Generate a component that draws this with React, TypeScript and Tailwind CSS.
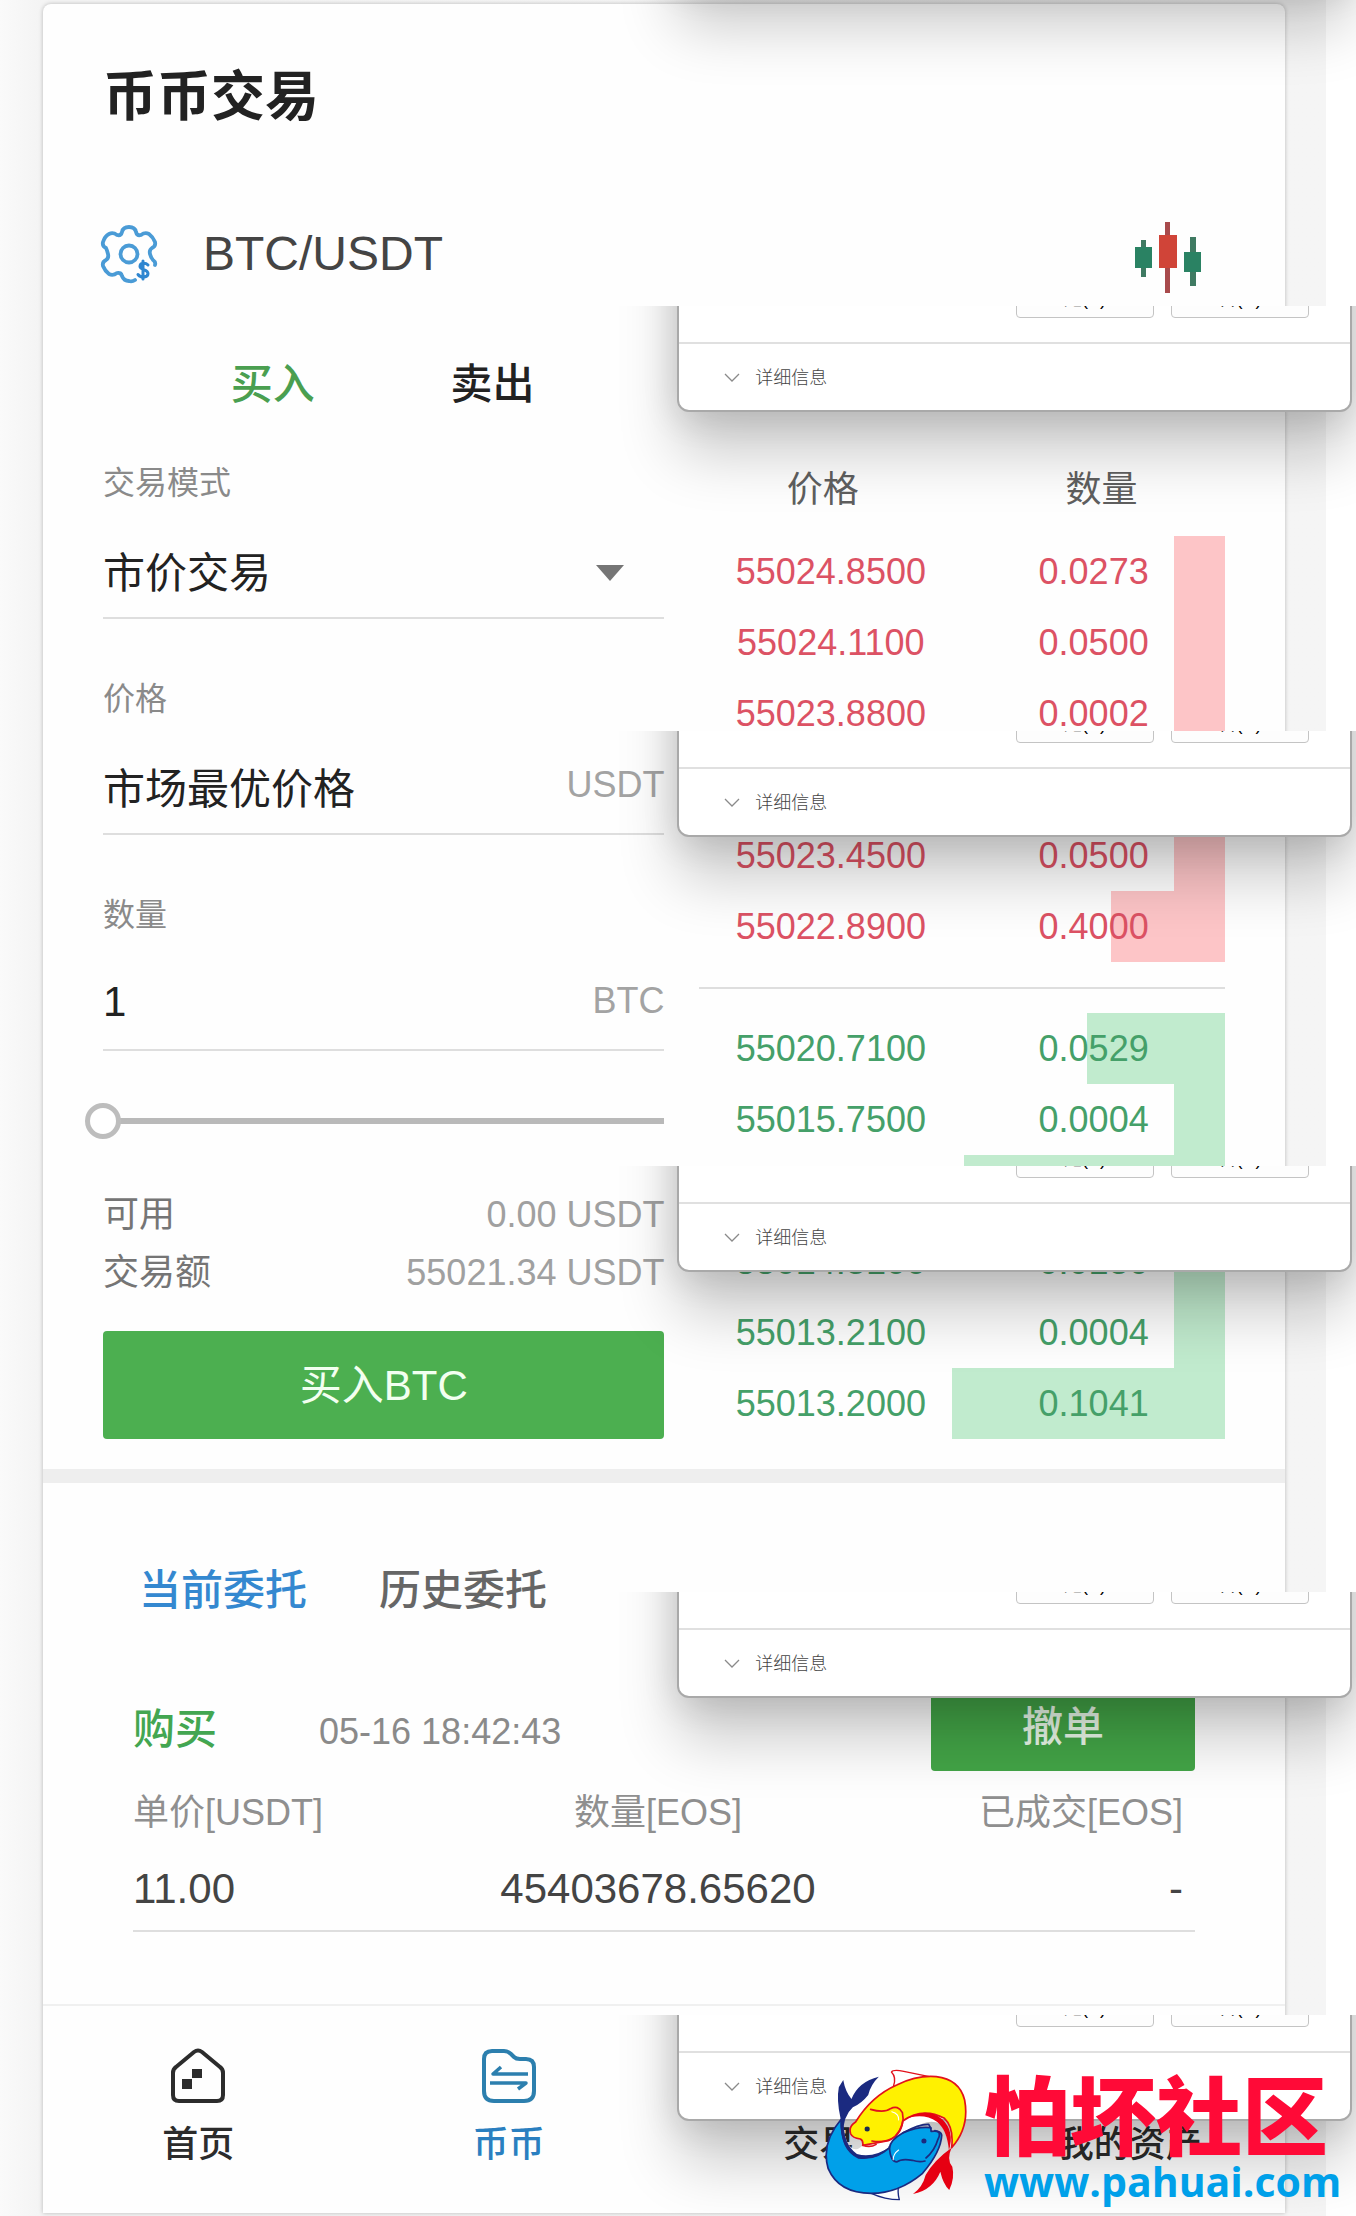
import React, { useState } from "react";
import { ArrowLeftRight, Wallet } from "lucide-react";

type BookRow = { price: string; amount: string; depth: number };

const asks: BookRow[] = [
  { price: "55024.8500", amount: "0.0273", depth: 9.7 },
  { price: "55024.1100", amount: "0.0500", depth: 9.7 },
  { price: "55023.8800", amount: "0.0002", depth: 9.7 },
  { price: "55023.6500", amount: "0.0100", depth: 9.7 },
  { price: "55023.4500", amount: "0.0500", depth: 9.7 },
  { price: "55022.8900", amount: "0.4000", depth: 21.7 },
];

const bids: BookRow[] = [
  { price: "55020.7100", amount: "0.0529", depth: 26.3 },
  { price: "55015.7500", amount: "0.0004", depth: 9.7 },
  { price: "55015.0000", amount: "0.1000", depth: 49.7 },
  { price: "55014.3100", amount: "0.0130", depth: 9.7 },
  { price: "55013.2100", amount: "0.0004", depth: 9.7 },
  { price: "55013.2000", amount: "0.1041", depth: 52 },
];

function GearIcon() {
  return (
    <svg viewBox="0 0 60 60" className="size-[60px]" fill="none" stroke="#4a9bd6" strokeWidth="3.8" strokeLinejoin="round" strokeLinecap="round" aria-hidden="true">
      <path d="M23 8q1-5 7-5t7 5q1 4 5 3 4-3 8-1 4 3 6 8 1 4-3 6-3 2-2 6t3 6q3 2 2 5M36 56q-3 2-6 1-5 0-7-5-1-4-5-3-4 3-8 1-4-3-6-8-1-4 3-6 3-2 2-6t-2-6q-4-2-3-6 2-6 6-8 4-2 8 1 4 1 5-3" />
      <circle cx="30" cy="30" r="8.500" />
      <path d="M49 41c-3-3-8-2-8 1.500s8 3 8 7-7 5-10 1M44 37v18" stroke="#2f86d0" strokeWidth="3" />
    </svg>
  );
}

function CandlesIcon() {
  return (
    <svg viewBox="0 0 68 74" className="h-[74px] w-[68px]" aria-hidden="true">
      <path d="M7 19h5v37H7zM56 16h6v49h-6z" fill="#3f7a62" />
      <path d="M1 26h17v21H1zM50 31h17v20H50z" fill="#2a8263" />
      <path d="M31 1h5v71h-5z" fill="#a84a4c" />
      <path d="M25 14h18v33H25z" fill="#d04438" />
    </svg>
  );
}

function HomeIcon() {
  return (
    <svg viewBox="0 0 56 56" className="size-14" fill="none" stroke="#2c2c2c" strokeWidth="4" strokeLinejoin="round" aria-hidden="true">
      <path d="M3 25q0-4 3-6L24 4q4-3 8 0l18 15q3 2 3 6v22q0 6-6 6H9q-6 0-6-6z" />
      <path d="M22 21h10v9H22zM12 31h10v10H12z" fill="#2c2c2c" stroke="none" />
    </svg>
  );
}

function CoinFolderIcon() {
  return (
    <svg viewBox="0 0 56 56" className="size-14" fill="none" stroke="#2c7fae" strokeWidth="4" strokeLinejoin="round" aria-hidden="true">
      <path d="M3 11q0-8 8-8h12q4 0 7 3l3 3q2 2 6 2h6q8 0 8 8v24q0 10-10 10H13Q3 53 3 43z" />
      <path d="M47 26H12l8-7M9 35h36l-8 6" strokeWidth="3.500" />
    </svg>
  );
}

function Field({ id, label, children }: { id: string; label: string; children: React.ReactNode }) {
  return (
    <div>
      <label htmlFor={id} className="flex h-12 items-center text-[32px] text-[#8a8a8a]">
        {label}
      </label>
      <div className="mt-[22px] flex h-[90px] items-center gap-3 border-b-2 border-[#dedede]">{children}</div>
    </div>
  );
}

function BookRows({ rows, tone }: { rows: BookRow[]; tone: "ask" | "bid" }) {
  const text = tone === "ask" ? "text-[#dc5264]" : "text-[#45a069]";
  const bar = tone === "ask" ? "bg-[#fdc5c7]" : "bg-[#c1ebce]";
  return (
    <tbody className={text}>
      {rows.map((r) => (
        <tr key={r.price} className="relative h-[71px]">
          <td>{r.price}</td>
          <td>
            <span className={`absolute inset-y-0 right-0 -z-10 ${bar}`} style={{ width: `${r.depth}%` }} />
            {r.amount}
          </td>
        </tr>
      ))}
    </tbody>
  );
}

function DialogSlice({ position, children }: { position: string; children?: React.ReactNode }) {
  return (
    <div className={`pointer-events-none absolute right-0 left-[45%] h-[250px] overflow-hidden ${position}`}>
      <section className="mr-1 -mt-[179px] ml-[67px] flex h-[285px] flex-col rounded-xl border-2 border-[#a9a9a9] bg-white shadow-[0_42px_60px_rgba(0,0,0,0.2),0_4px_36px_rgba(0,0,0,0.14)]">
        {children}
      </section>
    </div>
  );
}

function DialogFooter() {
  return (
    <>
      <div className="flex flex-1 items-end justify-end gap-[17px] border-b-2 border-[#e0e0e0] px-[41px] pb-[24px] text-[18px]">
        <button type="button" className="h-[34px] w-[138px] rounded border border-[#c4c4c4] bg-[#fdfdfd] pb-1 leading-6 text-black">是(Y)</button>
        <button type="button" className="h-[34px] w-[138px] rounded border border-[#c4c4c4] bg-[#fdfdfd] pb-1 leading-6 text-black">否(N)</button>
      </div>
      <button type="button" className="flex h-[66px] items-center gap-[15px] pt-0.5 pl-[45px] text-[18px] font-light text-[#444]">
        <svg viewBox="0 0 16 10" className="h-2.5 w-4" fill="none" stroke="#8a8a8a" strokeWidth="1.300" aria-hidden="true">
          <path d="M1 1l7 7 7-7" />
        </svg>
        详细信息
      </button>
    </>
  );
}

function FishLogo() {
  return (
    <svg viewBox="0 0 148 166" className="h-[166px] w-[148px] shrink-0" aria-hidden="true">
      <g transform="scale(.3419 .3333)" strokeLinejoin="round" strokeLinecap="round">
        <path d="M60 205Q48 150 55 112L68 90Q74 125 92 147Q112 95 172 80Q148 104 141 135Q122 160 96 172Q66 200 68 255Z" fill="#1b2a80" />
        <path d="M215 108Q224 82 209 66Q214 58 245 64L320 80" fill="#fff" stroke="#e2121c" strokeWidth="4" />
        <path d="M150 430Q190 449 232 449Q226 428 230 402" fill="#fff" stroke="#1b2a80" strokeWidth="4" />
        <path d="M62 205Q62 300 112 322Q168 328 203 288Q225 255 270 240Q330 190 378 242Q392 262 383 292L350 210Q300 180 240 210L124 287Q80 330 62 205Z" fill="#fff" />
        <path d="M385 293Q334 330 309 375Q300 412 272 432Q330 420 352 365Q360 402 378 420Q395 384 387 350Q369 328 385 293Z" fill="#e60012" />
        <path d="M90 252Q82 230 104 216Q150 138 226 104Q285 75 340 80Q408 88 423 150Q438 232 385 293Q392 232 364 205Q300 170 242 213Q238 255 200 272L125 286Q127 271 118 267Q95 264 90 252Z" fill="#fff100" stroke="#e2121c" strokeWidth="5" />
        <path d="M148 178Q188 190 206 176Q228 164 241 188Q250 225 220 259Q194 280 152 273M125 286Q148 294 164 283" fill="none" stroke="#e2121c" strokeWidth="5" />
        <path d="M244 209Q310 168 357 207Q395 245 377 301Q372 240 342 215Q300 186 244 209Z" fill="#e60012" />
        <path d="M62 208Q2 280 24 356Q55 430 150 430Q230 430 300 370Q354 305 356 256Q355 240 325 244L324 233Q290 228 243 248Q205 270 203 294Q152 338 100 314Q61 286 62 208Z" fill="#00a0e9" stroke="#1b2a80" strokeWidth="5" />
        <path d="M203 290Q205 335 225 336Q238 325 270 331Q291 338 307 333M243 248Q290 222 318 223L324 235M336 242Q357 245 345 268Q335 303 310 324" fill="none" stroke="#1b2a80" strokeWidth="5" />
        <path d="M60 208Q57 302 112 326Q168 334 205 290Q157 325 108 312Q68 285 68 208Z" fill="#1b2a80" />
        <path d="M230 300Q214 312 214 329M210 185Q232 191 230 210" fill="none" stroke="#fff" strokeWidth="3" />
        <circle cx="138" cy="237" r="7.500" fill="#1b2a50" />
        <circle cx="304" cy="273" r="7.500" fill="#1b2a80" />
      </g>
    </svg>
  );
}

const navItems = [
  { label: "首页", icon: <HomeIcon />, active: false },
  { label: "币币", icon: <CoinFolderIcon />, active: true },
  { label: "交易", icon: <ArrowLeftRight className="size-14" aria-hidden="true" />, active: false },
  { label: "我的资产", icon: <Wallet className="size-14" aria-hidden="true" />, active: false },
];

export default function App() {
  const [price, setPrice] = useState("市场最优价格");
  const [amount, setAmount] = useState("1");
  const [percent, setPercent] = useState(0);

  return (
    <div className="relative overflow-hidden bg-white font-['Liberation_Sans','Noto_Sans_CJK_SC',sans-serif] text-[#222]">
      <div className="mr-[30px] bg-linear-to-r from-[#fafafa] via-[#f4f4f4] via-3% to-[#f5f5f5] pt-1 pr-[41px] pb-[3px] pl-[43px]">
        <main className="rounded-t-lg bg-[#fefefe] shadow-[0_0_4px_rgba(0,0,0,0.25)]">
          <header className="px-[60px]">
            <h1 className="flex h-[182px] items-center pt-1 text-[54px] font-bold">币币交易</h1>
            <div className="flex h-[136px] items-center">
              <button type="button" aria-label="设置" className="-ml-1">
                <GearIcon />
              </button>
              <h2 className="ml-11 text-[48px] text-[#444]">BTC/USDT</h2>
              <button type="button" aria-label="K线图" className="mt-2 mr-[23px] ml-auto">
                <CandlesIcon />
              </button>
            </div>
          </header>

          <section className="grid grid-cols-[562fr_526fr] gap-[35px] px-[60px] pb-[30px]">
            <form onSubmit={(e) => e.preventDefault()}>
              <div className="mb-[13px] grid h-[124px] grid-cols-2 gap-[34px] px-[52px] text-[42px] font-medium">
                <button type="button" className="pl-6 text-[#4a9f50]">买入</button>
                <button type="button" className="pr-7">卖出</button>
              </div>
              <div className="flex flex-col gap-14">
                <Field id="mode" label="交易模式">
                  <select id="mode" className="w-full flex-1 appearance-none bg-transparent text-[42px] outline-none">
                    <option>市价交易</option>
                  </select>
                  <svg viewBox="0 0 28 16" className="mr-10 h-4 w-7" fill="#757575" aria-hidden="true">
                    <path d="M0 0h28L14 16z" />
                  </svg>
                </Field>
                <Field id="price" label="价格">
                  <input id="price" value={price} onChange={(e) => setPrice(e.target.value)} className="w-full min-w-0 flex-1 bg-transparent text-[42px] outline-none" />
                  <span className="pb-2 text-[36px] text-[#a3a3a3]">USDT</span>
                </Field>
                <Field id="amount" label="数量">
                  <input id="amount" value={amount} onChange={(e) => setAmount(e.target.value)} className="w-full min-w-0 flex-1 bg-transparent pb-2 text-[42px] outline-none" />
                  <span className="pb-2 text-[36px] text-[#a3a3a3]">BTC</span>
                </Field>
              </div>
              <div className="mt-[52px] -ml-[18px] flex h-9">
                <input
                  type="range"
                  aria-label="数量比例"
                  min={0}
                  max={100}
                  value={percent}
                  onChange={(e) => setPercent(Number(e.target.value))}
                  className="w-full appearance-none bg-transparent [&::-webkit-slider-runnable-track]:h-[6px] [&::-webkit-slider-runnable-track]:bg-linear-to-r [&::-webkit-slider-runnable-track]:from-transparent [&::-webkit-slider-runnable-track]:from-[20px] [&::-webkit-slider-runnable-track]:to-[#b9b9b9] [&::-webkit-slider-runnable-track]:to-[20px] [&::-webkit-slider-thumb]:-mt-[15px] [&::-webkit-slider-thumb]:size-9 [&::-webkit-slider-thumb]:appearance-none [&::-webkit-slider-thumb]:rounded-full [&::-webkit-slider-thumb]:border-[5px] [&::-webkit-slider-thumb]:border-solid [&::-webkit-slider-thumb]:border-[#bdbdbd] [&::-webkit-slider-thumb]:bg-white"
                />
              </div>
              <dl className="mt-[47px] text-[36px]">
                <div className="flex h-[58px] items-center justify-between">
                  <dt className="text-[#757575]">可用</dt>
                  <dd className="text-[#a0a0a0]">0.00 USDT</dd>
                </div>
                <div className="flex h-[58px] items-center justify-between">
                  <dt className="text-[#757575]">交易额</dt>
                  <dd className="text-[#a0a0a0]">55021.34 USDT</dd>
                </div>
              </dl>
              <button type="submit" className="mt-[29px] h-[108px] w-full rounded bg-[#4caf50] text-[42px] text-[#f2fff0]">
                买入BTC
              </button>
            </form>

            <div className="pt-[122px]">
              <table className="isolate w-full table-fixed border-collapse text-center text-[36px]">
                <thead>
                  <tr className="h-[92px] text-[#5f5f5f]">
                    <th className="pr-4 font-normal">价格</th>
                    <th className="pl-4 font-normal">数量</th>
                  </tr>
                </thead>
                <BookRows rows={asks} tone="ask" />
                <tbody>
                  <tr className="h-[51px]">
                    <td colSpan={2}>
                      <hr className="border-t-2 border-[#dedede]" />
                    </td>
                  </tr>
                </tbody>
                <BookRows rows={bids} tone="bid" />
              </table>
            </div>
          </section>

          <section className="border-t-[14px] border-[#eeeeee] px-[90px] pt-[53px] pb-[72px]">
            <div className="flex h-[108px] items-center gap-[72px] pl-[6px] text-[42px] font-medium">
              <button type="button" className="text-[#3488d0]">当前委托</button>
              <button type="button" className="text-[#666]">历史委托</button>
            </div>
            <div className="mt-10 flex h-[87px] items-center">
              <strong className="pt-1 text-[42px] font-medium text-[#43a651]">购买</strong>
              <time className="ml-[102px] pt-2 text-[36px] text-[#8a8a8a]">05-16 18:42:43</time>
              <button type="button" className="ml-auto h-full w-[264px] rounded bg-[#43a547] text-[41px] font-medium text-[#e9f8e8]">
                撤单
              </button>
            </div>
            <table className="mt-2 w-full table-fixed border-collapse border-b-2 border-[#dedede]">
              <thead>
                <tr className="h-[68px] text-[36px] text-[#8f8f8f]">
                  <th className="text-left font-normal">单价[USDT]</th>
                  <th className="pr-3 text-center font-normal">数量[EOS]</th>
                  <th className="pr-3 text-right font-normal">已成交[EOS]</th>
                </tr>
              </thead>
              <tbody>
                <tr className="h-[84px] text-[42px] text-[#444]">
                  <td>11.00</td>
                  <td className="pr-3 text-center">45403678.65620</td>
                  <td className="pr-3 text-right">-</td>
                </tr>
              </tbody>
            </table>
          </section>

          <nav className="grid h-[209px] grid-cols-4 border-t-2 border-[#f0f0f0]">
            {navItems.map((n) => (
              <a
                key={n.label}
                href="#"
                className={`flex flex-col items-center gap-4 pt-[42px] text-[36px] leading-[50px] font-medium ${n.active ? "text-[#2a7fc0]" : "text-[#2c2c2c]"}`}
              >
                {n.icon}
                {n.label}
              </a>
            ))}
          </nav>
        </main>
      </div>

      <DialogSlice position="-top-[121px]" />
      <DialogSlice position="top-[306px]"><DialogFooter /></DialogSlice>
      <DialogSlice position="top-[731px]"><DialogFooter /></DialogSlice>
      <DialogSlice position="top-[1166px]"><DialogFooter /></DialogSlice>
      <DialogSlice position="top-[1592px]"><DialogFooter /></DialogSlice>
      <DialogSlice position="top-[2015px]"><DialogFooter /></DialogSlice>

      <aside className="absolute right-0 bottom-0 flex w-[536px]">
        <FishLogo />
        <div className="flex flex-1 flex-col items-start pt-[26px] pl-4 whitespace-nowrap">
          <strong className="text-[86px] leading-[86px] font-black text-[#ff0a37]">怕坏社区</strong>
          <a href="#" className="font-['Open_Sans','Noto_Sans',sans-serif] text-[41px] leading-[38px] font-bold text-[#00a0e9]">
            www.pahuai.com
          </a>
        </div>
      </aside>
    </div>
  );
}
